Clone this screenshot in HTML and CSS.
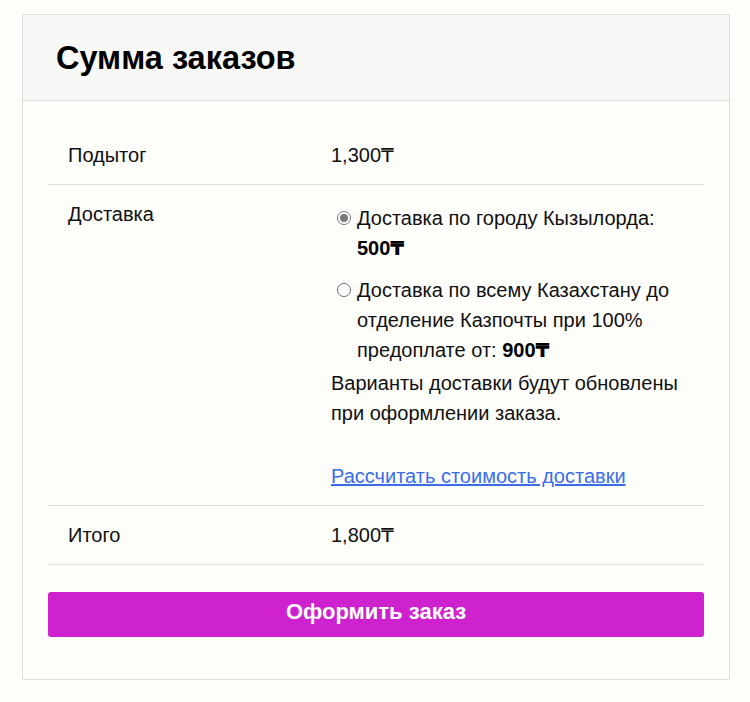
FILE: index.html
```html
<!DOCTYPE html>
<html lang="ru">
<head>
<meta charset="utf-8">
<link rel="stylesheet" href="styles.css">
</head>
<body>
<div class="page">
  <section class="card">
    <header class="card-head">
      <h2 class="title">Сумма заказов</h2>
    </header>
    <div class="card-body">
      <div class="totals">
        <div class="row">
          <div class="label">Подытог</div>
          <div class="value">1,300₸</div>
        </div>
        <div class="row">
          <div class="label">Доставка</div>
          <div class="value">
            <ul class="methods">
              <li class="method"><span class="radio checked"></span><span class="method-text">Доставка по городу Кызылорда: <b>500₸</b></span></li>
              <li class="method"><span class="radio"></span><span class="method-text">Доставка по всему Казахстану до отделение Казпочты при 100% предоплате от: <b>900₸</b></span></li>
            </ul>
            <p class="note">Варианты доставки будут обновлены при оформлении заказа.</p>
            <a class="calc" href="#">Рассчитать стоимость доставки</a>
          </div>
        </div>
        <div class="row">
          <div class="label">Итого</div>
          <div class="value">1,800₸</div>
        </div>
      </div>
      <a class="checkout" href="#">Оформить заказ</a>
    </div>
  </section>
</div>
</body>
</html>
```

FILE: styles.css
```css
html, body {
  margin: 0;
  padding: 0;
  background: #fdfdfa;
}
body {
  font-family: "Liberation Sans", Arial, "DejaVu Sans", sans-serif;
  color: #111;
  font-size: 20px;
  line-height: 30px;
}
.page {
  padding: 14px 20px 0 22px;
}
.card {
  width: 708px;
  box-sizing: border-box;
  border: 1px solid #dededc;
  background: #fdfdfa;
}
.card-head {
  background: #f8f8f6;
  border-bottom: 1px solid #dededc;
  height: 85px;
  display: flex;
  align-items: center;
  padding-left: 33px;
}
.title {
  margin: 0;
  font-size: 32.5px;
  font-weight: bold;
  line-height: 40px;
  color: #000;
}
.card-body {
  padding: 25px 25px 42px 25px;
}
.totals {
  display: flex;
  flex-direction: column;
}
.row {
  display: grid;
  grid-template-columns: 263px 1fr;
  border-bottom: 1px solid #dededc;
}
.label {
  padding: 14px 20px;
}
.value {
  padding: 14px 20px;
}
.methods {
  list-style: none;
  margin: 4px 0 3px 5px;
  padding: 0;
}
.method {
  display: flex;
  align-items: flex-start;
  margin-bottom: 12px;
}
.method:last-child {
  margin-bottom: 0;
}
.radio {
  flex: none;
  width: 14px;
  height: 14px;
  box-sizing: border-box;
  border: 1px solid #6f6f6f;
  border-radius: 50%;
  margin: 8px 6px 0 1px;
  background: #fff;
  position: relative;
}
.radio.checked {
  border-color: #7a7a7a;
}
.radio.checked::after {
  content: "";
  position: absolute;
  left: 2px;
  top: 2px;
  width: 8px;
  height: 8px;
  border-radius: 50%;
  background: #7a7a7a;
}
.method-text b {
  font-weight: bold;
  color: #000;
}
.note {
  margin: 0 0 33px 0;
}
.calc {
  color: #3a6ee8;
  text-decoration: underline;
}
.checkout {
  display: block;
  margin-top: 27px;
  height: 45px;
  line-height: 40px;
  background: #cf22cf;
  color: #fff;
  border-radius: 3px;
  text-align: center;
  font-weight: bold;
  font-size: 22px;
  text-decoration: none;
}
```
